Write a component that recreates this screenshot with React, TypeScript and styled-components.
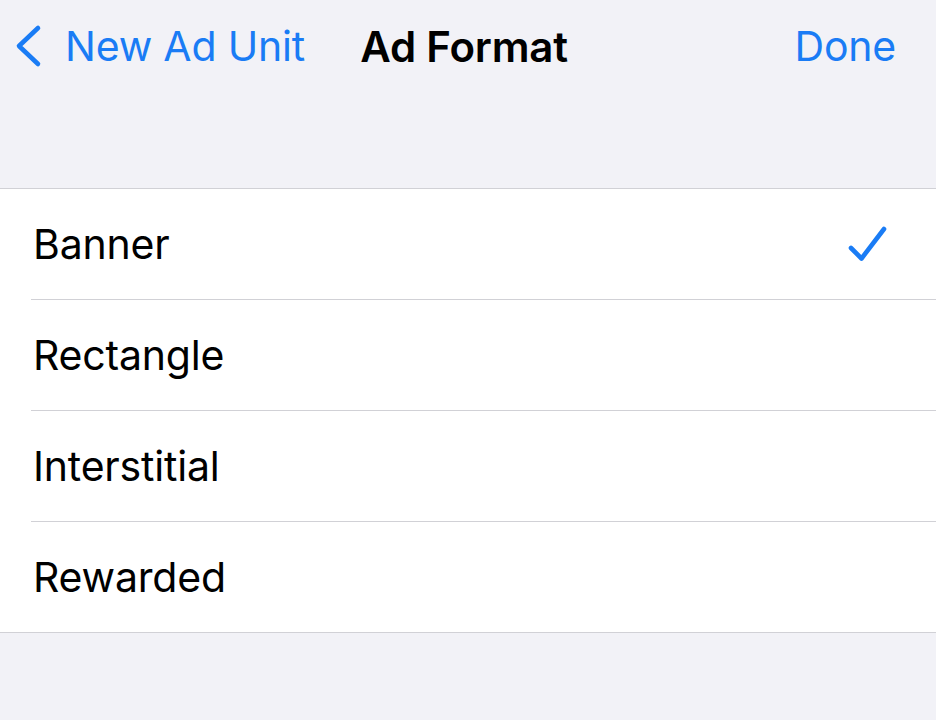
import React from "react";
import styled, {createGlobalStyle} from "styled-components";

const GlobalStyle = createGlobalStyle`
  html, body {
    margin: 0;
    padding: 0;
    background: #f2f2f7;
  }
  body {
    font-family: Inter, "Noto Sans", "Liberation Sans", sans-serif;
    -webkit-font-smoothing: antialiased;
  }
`;

const formats = ["Banner", "Rectangle", "Interstitial", "Rewarded"];

const BackChevron = () => (
  <svg width="30" height="44" viewBox="0 0 30 44" fill="none">
    <path
      d="M25 4 L6 22 L25 40"
      stroke="#1a7cf5"
      strokeWidth="4.6"
      strokeLinecap="round"
      strokeLinejoin="round"
    />
  </svg>
);

const CheckMark = () => (
  <svg width="40" height="38" viewBox="0 0 40 38" fill="none">
    <path
      d="M3 23 L13.5 33.5 L36 4"
      stroke="#1a7cf5"
      strokeWidth="4.6"
      strokeLinecap="round"
      strokeLinejoin="round"
    />
  </svg>
);

export default function App() {
  const selected = "Banner";

  return (
    <Page>
      <GlobalStyle />
      <NavBar>
        <BackButton>
          <BackChevron />
          <span>New Ad Unit</span>
        </BackButton>
        <Title>Ad Format</Title>
        <DoneButton>Done</DoneButton>
      </NavBar>

      <List>
        {formats.map((name) => (
          <Row key={name}>
            <RowLabel>{name}</RowLabel>
            {name === selected && (
              <CheckWrapper>
                <CheckMark />
              </CheckWrapper>
            )}
          </Row>
        ))}
      </List>
    </Page>
  );
}

const Page = styled.div`
  width: 936px;
  height: 720px;
  background: #f2f2f7;
  overflow: hidden;
`;

const NavBar = styled.div`
  display: grid;
  grid-template-columns: 1fr auto 1fr;
  align-items: center;
  height: 92px;
  padding: 0 13px;
  margin-bottom: 96px;
`;

const BackButton = styled.div`
  display: flex;
  align-items: center;
  gap: 22px;
  color: #1a7cf5;
  font-size: 41px;
  letter-spacing: -0.2px;
  justify-self: start;

  & > svg {
    flex-shrink: 0;
  }
`;

const Title = styled.div`
  font-size: 42px;
  font-weight: 600;
  color: #000;
  letter-spacing: -0.2px;
  margin-right: 8px;
`;

const DoneButton = styled.div`
  justify-self: end;
  margin-right: 27px;
  color: #1a7cf5;
  font-size: 41px;
  letter-spacing: -0.2px;
`;

const List = styled.div`
  background: #fff;
  border-top: 1px solid #d1d1d6;
  border-bottom: 1px solid #d1d1d6;
  padding-left: 31px;
`;

const Row = styled.div`
  display: flex;
  align-items: center;
  justify-content: space-between;
  height: 110px;
  padding-right: 48px;

  &:not(:last-child) {
    border-bottom: 1px solid #d1d1d6;
  }
`;

const RowLabel = styled.div`
  font-size: 41px;
  color: #000;
  padding-left: 2px;
  letter-spacing: -0.2px;
`;

const CheckWrapper = styled.div`
  display: flex;
  align-items: center;
`;
